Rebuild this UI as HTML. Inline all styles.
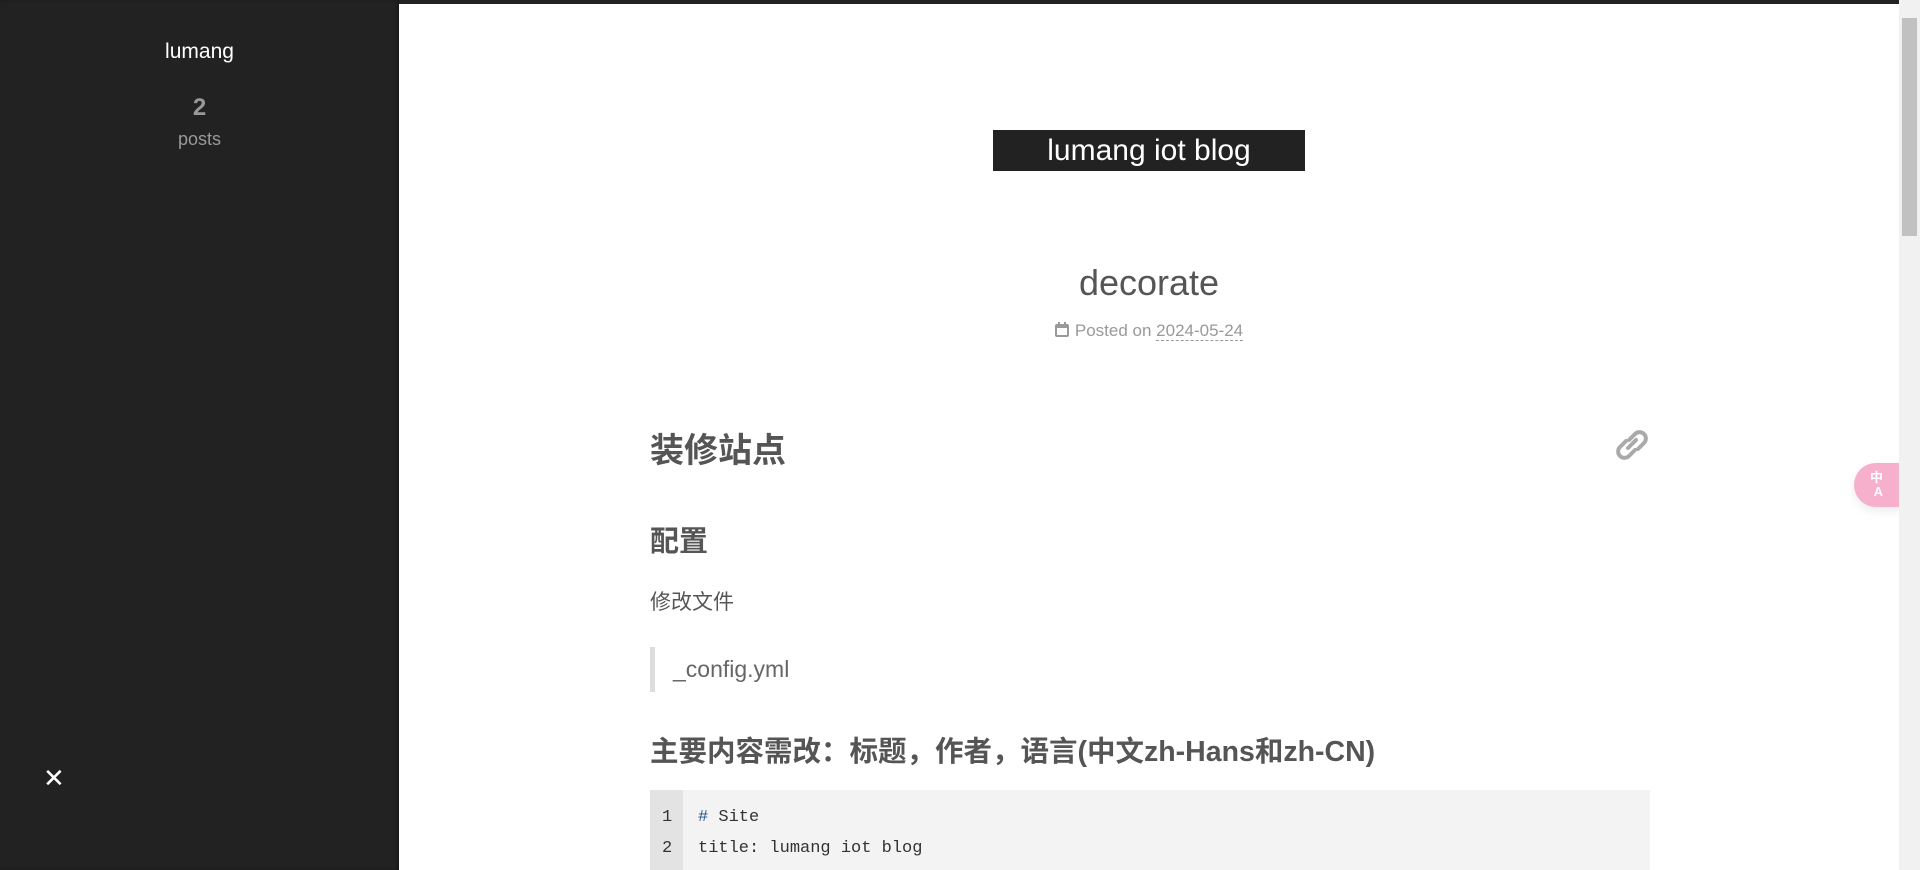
<!DOCTYPE html>
<html><head><meta charset="utf-8"><style>
*{margin:0;padding:0;box-sizing:border-box}
body{width:1920px;height:870px;overflow:hidden;background:#fff;font-family:"Liberation Sans","Noto Sans CJK SC",sans-serif;position:relative;color:#555}
.topbar{position:absolute;left:0;top:0;width:1899px;height:4px;background:#222}
.side{position:absolute;left:0;top:0;width:399px;height:870px;background:#222;box-shadow:inset -2px 0 3px rgba(0,0,0,.3)}
.side .name{position:absolute;top:40px;width:100%;text-align:center;color:#fff;font-size:21px}
.side .num{position:absolute;top:94px;width:100%;text-align:center;color:#999;font-size:24px;font-weight:bold}
.side .posts{position:absolute;top:129px;width:100%;text-align:center;color:#999;font-size:18px}
.side .x{position:absolute;left:43px;top:763px;color:#fff;font-size:26px;line-height:30px}
.sb{position:absolute;left:1899px;top:0;width:21px;height:870px;background:#f1f1f1}
.sb i{position:absolute;left:3px;top:18px;width:15px;height:218px;background:#c1c1c1}
.brand{position:absolute;left:993px;top:130px;width:312px;height:41px;background:#222;color:#fff;font-size:30px;text-align:center;line-height:41px}
.title{position:absolute;left:0;width:1899px;padding-left:399px;text-align:center}
.t1{top:262px;font-size:36px;color:#555}
.t2{top:321px;font-size:17px;color:#999}
.t2 u{text-decoration:none;border-bottom:1px dashed #999}
.c{position:absolute;left:650px;width:1000px}
.h1{top:423px;font-size:34px;font-weight:bold}
.h2{top:518px;font-size:29px;font-weight:bold}
.p{top:586px;font-size:21px}
.bq{top:647px;height:45px;border-left:5px solid #ddd;padding-left:18px;font-size:23px;color:#666;line-height:45px}
.h3{top:729px;font-size:28.5px;font-weight:bold}
.code{top:790px;height:80px;background:#f3f3f3;font-family:"Liberation Mono",monospace;font-size:17px;color:#333}
.code .g{position:absolute;left:0;top:0;width:33px;height:80px;background:#e3e3e3}
.code div.l{position:absolute;left:0;height:30px;line-height:30px}
.tr{position:absolute;left:1854px;top:463px;width:48px;height:44px;background:#f7b0cc;border-radius:22px 0 0 22px;box-shadow:0 4px 10px rgba(0,0,0,.08);color:#fff;font-size:13px;font-weight:bold;line-height:14px;padding:8px 0 0 16px}
</style></head><body>
<div class="topbar"></div>
<div class="side">
<div class="name">lumang</div>
<div class="num">2</div>
<div class="posts">posts</div>
<div class="x">✕</div>
</div>
<div class="brand">lumang iot blog</div>
<div class="title t1">decorate</div>
<div class="title t2"><svg width="14" height="15" viewBox="0 0 14 15" style="vertical-align:-1px;margin-right:6px"><rect x="1" y="3" width="12" height="11" rx="1" fill="none" stroke="#999" stroke-width="2"/><rect x="1" y="3" width="12" height="3" fill="#999"/><rect x="3" y="0" width="2" height="4" fill="#999"/><rect x="9" y="0" width="2" height="4" fill="#999"/></svg>Posted on <u>2024-05-24</u></div>
<div class="c h1">装修站点</div>
<svg style="position:absolute;left:1613px;top:428px" width="38" height="34" viewBox="0 0 38 34"><g fill="none" stroke="#aaa" stroke-width="4" stroke-linecap="round"><path d="M16 12 L22 6 a6 6 0 0 1 9 9 L25 21"/><path d="M22 22 L16 28 a6 6 0 0 1 -9 -9 L13 13"/><path d="M15 20 L23 12"/></g></svg>
<div class="c h2">配置</div>
<div class="c p">修改文件</div>
<div class="c bq" style="width:auto">_config.yml</div>
<div class="c h3">主要内容需改：标题，作者，语言(中文zh-Hans和zh-CN)</div>
<div class="c code"><div class="g"></div>
<div class="l" style="top:13px;left:12px">1</div><div class="l" style="top:13px;left:48px"><span style="color:#258">#</span> Site</div>
<div class="l" style="top:44px;left:12px">2</div><div class="l" style="top:44px;left:48px">title: lumang iot blog</div>
</div>
<div class="tr">中<br>&nbsp;A</div>
<div class="sb"><i></i></div>
</body></html>
